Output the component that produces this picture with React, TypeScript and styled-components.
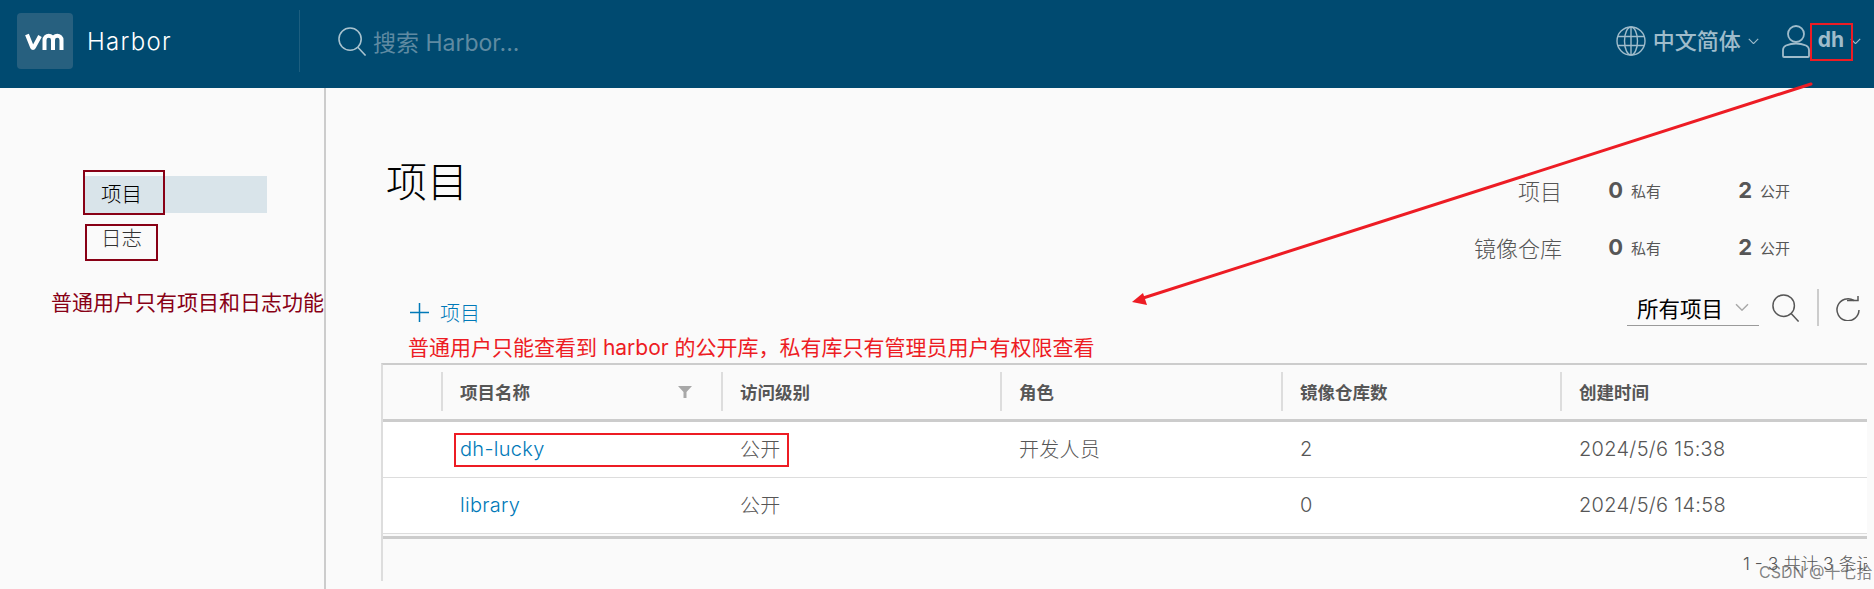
import React from 'react';
import styled, { createGlobalStyle } from 'styled-components';

const GlobalStyle = createGlobalStyle`
  html, body {
    margin: 0;
    padding: 0;
    background: #fafafa;
  }
  * {
    box-sizing: border-box;
  }
`;

const FONT = `Inter, Lato, "Noto Sans CJK SC", sans-serif`;

const Page = styled.div`
  position: relative;
  width: 1874px;
  height: 589px;
  overflow: hidden;
  background: #fafafa;
  font-family: ${FONT};
  color: #565656;
`;

const Header = styled.header`
  display: flex;
  align-items: center;
  height: 88px;
  padding-bottom: 6px;
  background: #004a70;
`;

const Brand = styled.div`
  display: flex;
  align-items: center;
  gap: 14px;
  width: 299px;
  padding-left: 17px;
`;

const LogoBox = styled.div`
  display: flex;
  align-items: center;
  justify-content: center;
  width: 56px;
  height: 56px;
  border-radius: 4px;
  background: #27607f;
`;

const BrandName = styled.span`
  font-size: 24px;
  font-weight: 300;
  color: #fff;
  letter-spacing: 1.3px;
`;

const HeaderDivider = styled.div`
  width: 1px;
  height: 62px;
  background: #1d5e7f;
`;

const SearchBox = styled.div`
  display: flex;
  align-items: center;
  gap: 6px;
  margin-left: 38px;
  color: #5f8aa2;
  font-size: 23px;
`;

const HeaderRight = styled.div`
  display: flex;
  align-items: center;
  margin-left: auto;
  padding-right: 13px;
  color: #9fbccb;
`;

const Language = styled.div`
  display: flex;
  align-items: center;
  gap: 7px;
  font-size: 22px;
  font-weight: 500;
`;

const LanguageName = styled.span`
  margin-top: -4px;
`;

const UserName = styled.span`
  margin: -3px 6px 0 7px;
  font-size: 21px;
  font-weight: 700;
`;

const UserMenu = styled.div`
  display: flex;
  align-items: center;
  margin-left: 22px;
`;

const Body = styled.div`
  display: flex;
  height: 501px;
`;

const Sidebar = styled.aside`
  width: 326px;
  padding-top: 88px;
  border-right: 2px solid #ccc;
`;

const NavItem = styled.div<{ $active?: boolean }>`
  display: flex;
  align-items: center;
  width: 184px;
  height: 37px;
  margin-left: 83px;
  padding: 0 0 3px 18px;
  font-size: 20.5px;
  font-weight: 300;
  background: ${(p) => (p.$active ? '#d9e4ea' : 'transparent')};
  color: ${(p) => (p.$active ? '#000' : '#333')};

  & + & {
    margin-top: 7px;
  }
`;

const SideNote = styled.div`
  margin: 31px 0 0 51px;
  font-size: 21px;
  line-height: 30px;
  white-space: nowrap;
  color: #880015;
`;

const Main = styled.main`
  flex: 1;
  min-width: 0;
  padding: 0 7px 0 55px;
`;

const PageHead = styled.div`
  display: flex;
  justify-content: space-between;
  height: 200px;
`;

const Title = styled.h1`
  margin: 72px 0 0 5px;
  font-size: 41px;
  font-weight: 300;
  line-height: 44px;
  color: #000;
`;

const Stats = styled.div`
  display: flex;
  flex-direction: column;
  gap: 29px;
  margin: 88px 77px 0 0;
`;

const StatRow = styled.div`
  display: flex;
  align-items: center;
  height: 28px;
`;

const StatLabel = styled.span`
  width: 100px;
  margin-right: 46px;
  font-size: 22px;
  font-weight: 300;
  text-align: right;
`;

const StatCell = styled.span`
  display: flex;
  align-items: center;
  gap: 8px;
  width: 130px;
  font-size: 15px;

  &:last-child {
    width: auto;
  }
`;

const StatCount = styled.b`
  font-size: 22px;
  font-weight: 700;
`;

const Toolbar = styled.div`
  display: flex;
  align-items: center;
  justify-content: space-between;
  height: 39px;
  padding: 0 7px 0 29px;
`;

const AddButton = styled.div`
  display: flex;
  align-items: center;
  gap: 11px;
  margin-top: 9px;
  font-size: 20px;
  font-weight: 300;
  color: #0079b8;
`;

const ToolGroup = styled.div`
  display: flex;
  align-items: center;
  gap: 13px;
`;

const FilterSelect = styled.div`
  display: flex;
  align-items: center;
  justify-content: space-between;
  width: 132px;
  height: 36px;
  padding: 0 10px;
  border-bottom: 1px solid #9a9a9a;
  font-size: 21.5px;
  color: #000;
`;

const ToolActions = styled.div`
  display: flex;
  align-items: center;
`;

const ToolDivider = styled.div`
  width: 2px;
  height: 37px;
  margin: 0 17px 0 17px;
  background: #ccc;
`;

const RedNote = styled.div`
  height: 36px;
  padding: 3px 0 0 27px;
  font-size: 21px;
  line-height: 36px;
  white-space: nowrap;
  color: #ed1c24;
`;

const Table = styled.div`
  border-left: 2px solid #ddd;
  border-top: 2px solid #ccc;
`;

const COLUMNS = '58px 280px 279px 281px 279px 307px';

const HeadRow = styled.div`
  display: grid;
  grid-template-columns: ${COLUMNS};
  height: 57px;
  padding: 7px 0 8px;
  border-bottom: 3px solid #ccc;
`;

const HeadCell = styled.div`
  display: flex;
  align-items: center;
  justify-content: space-between;
  padding: 0 29px 0 17px;
  border-left: 2px solid #ddd;
  font-size: 17.5px;
  font-weight: 700;

  &:first-child {
    border-left: 0;
  }
`;

const Row = styled.div`
  display: grid;
  grid-template-columns: ${COLUMNS};
  align-items: center;
  height: 56px;
  padding-bottom: 2px;
  background: #fff;
  border-bottom: 1px solid #ddd;
`;

const Cell = styled.div`
  padding-left: 19px;
  font-size: 20px;
  font-weight: 300;
  letter-spacing: 0.3px;
`;

const ProjectLink = styled(Cell)`
  color: #0079b8;
`;

const TableFooter = styled.div`
  height: 45px;
  margin-top: 2px;
  padding-left: 1360px;
  border-top: 3px solid #ccc;
  overflow: hidden;
  font-size: 17.5px;
  font-weight: 300;
  line-height: 50px;
  white-space: nowrap;
`;

// screenshot annotations drawn on top of the page
const Highlight = styled.div<{ $x: number; $y: number; $w: number; $h: number; $color: string }>`
  position: absolute;
  left: ${(p) => p.$x}px;
  top: ${(p) => p.$y}px;
  width: ${(p) => p.$w}px;
  height: ${(p) => p.$h}px;
  border: 2px solid ${(p) => p.$color};
`;

const ArrowLayer = styled.svg`
  position: absolute;
  left: 0;
  top: 0;
  pointer-events: none;
`;

const Watermark = styled.div`
  position: absolute;
  left: 1759px;
  top: 562px;
  font-size: 16px;
  line-height: 20px;
  color: rgba(90, 90, 90, 0.75);
`;

const VmLogo = () => (
  <svg width="40" height="17" viewBox="0 0 40 17" fill="none" stroke="#fff" strokeWidth="4">
    <path d="M2 1.500l5 12.500q1 2 2 0L15 3" />
    <path d="M19.500 17V7a4 4 0 0 1 8.500 0v10M28 7a4 4 0 0 1 8.500 0v10" />
  </svg>
);

const SearchIcon = ({ size, color }: { size: number; color: string }) => (
  <svg width={size} height={size} viewBox="0 0 30 30" fill="none" stroke={color} strokeWidth="1.6">
    <circle cx="12.5" cy="12.5" r="11.5" />
    <path d="M20.5 21l8 8.5" />
  </svg>
);

const GlobeIcon = () => (
  <svg width="30" height="30" viewBox="0 0 30 30" fill="none" stroke="#9fbccb" strokeWidth="1.4">
    <circle cx="15" cy="15" r="14" />
    <ellipse cx="15" cy="15" rx="6.5" ry="14" />
    <path d="M15 1v28M2 10.5h26M2 19.5h26" />
  </svg>
);

const UserIcon = () => (
  <svg width="30" height="33" viewBox="0 0 28 33" fill="none" stroke="#9fbccb" strokeWidth="1.8">
    <circle cx="14" cy="9" r="8" />
    <path d="M1 31v-6q0-3 3-4.500q5-2 10-2t10 2q3 1.500 3 4.500v6q0 1-1 1H2q-1 0-1-1z" />
  </svg>
);

const Chevron = ({ color, size = 11 }: { color: string; size?: number }) => (
  <svg width={size} height={size * 0.6} viewBox="0 0 11 7" fill="none" stroke={color} strokeWidth="1.2">
    <path d="M.5 1l5 5 5-5" />
  </svg>
);

const PlusIcon = () => (
  <svg width="19" height="19" viewBox="0 0 19 19" stroke="#0079b8" strokeWidth="1.5">
    <path d="M9.500 0v19M0 9.500h19" />
  </svg>
);

const FilterIcon = () => (
  <svg width="14" height="12" viewBox="0 0 14 12" fill="#a8a8a8">
    <path d="M0 0h14L8.500 6v6h-3V6z" />
  </svg>
);

const RefreshIcon = () => (
  <svg width="24" height="26" viewBox="0 0 24 26" fill="none" stroke="#565656" strokeWidth="1.5">
    <path d="M18 5.500A11 11 0 1 0 23 15" />
    <path d="M11 5.500h11V1" />
  </svg>
);

const projects = [
  { name: 'dh-lucky', access: '公开', role: '开发人员', repos: 2, created: '2024/5/6 15:38' },
  { name: 'library', access: '公开', role: '', repos: 0, created: '2024/5/6 14:58' },
];

const stats = [
  { label: '项目', priv: 0, pub: 2 },
  { label: '镜像仓库', priv: 0, pub: 2 },
];

export default function App() {
  return (
    <Page>
      <GlobalStyle />
      <Header>
        <Brand>
          <LogoBox>
            <VmLogo />
          </LogoBox>
          <BrandName>Harbor</BrandName>
        </Brand>
        <HeaderDivider />
        <SearchBox>
          <SearchIcon size={29} color="#a9c3cf" />
          搜索 Harbor...
        </SearchBox>
        <HeaderRight>
          <Language>
            <GlobeIcon />
            <LanguageName>中文简体</LanguageName>
            <Chevron color="#9fbccb" />
          </Language>
          <UserMenu>
            <UserIcon />
            <UserName>dh</UserName>
            <Chevron color="#9fbccb" />
          </UserMenu>
        </HeaderRight>
      </Header>
      <Body>
        <Sidebar>
          <NavItem $active>项目</NavItem>
          <NavItem>日志</NavItem>
          <SideNote>普通用户只有项目和日志功能</SideNote>
        </Sidebar>
        <Main>
          <PageHead>
            <Title>项目</Title>
            <Stats>
              {stats.map((s) => (
                <StatRow key={s.label}>
                  <StatLabel>{s.label}</StatLabel>
                  <StatCell>
                    <StatCount>{s.priv}</StatCount>私有
                  </StatCell>
                  <StatCell>
                    <StatCount>{s.pub}</StatCount>公开
                  </StatCell>
                </StatRow>
              ))}
            </Stats>
          </PageHead>
          <Toolbar>
            <AddButton>
              <PlusIcon />
              项目
            </AddButton>
            <ToolGroup>
              <FilterSelect>
                所有项目
                <Chevron color="#a8a8a8" size={14} />
              </FilterSelect>
              <ToolActions>
                <SearchIcon size={28} color="#565656" />
                <ToolDivider />
                <RefreshIcon />
              </ToolActions>
            </ToolGroup>
          </Toolbar>
          <RedNote>普通用户只能查看到 harbor 的公开库，私有库只有管理员用户有权限查看</RedNote>
          <Table>
            <HeadRow>
              <HeadCell />
              <HeadCell>
                项目名称
                <FilterIcon />
              </HeadCell>
              <HeadCell>访问级别</HeadCell>
              <HeadCell>角色</HeadCell>
              <HeadCell>镜像仓库数</HeadCell>
              <HeadCell>创建时间</HeadCell>
            </HeadRow>
            {projects.map((p) => (
              <Row key={p.name}>
                <Cell />
                <ProjectLink>{p.name}</ProjectLink>
                <Cell>{p.access}</Cell>
                <Cell>{p.role}</Cell>
                <Cell>{p.repos}</Cell>
                <Cell>{p.created}</Cell>
              </Row>
            ))}
            <TableFooter>1 - 3 共计 3 条记录</TableFooter>
          </Table>
        </Main>
      </Body>

      <Highlight $x={83} $y={170} $w={82} $h={45} $color="#880015" />
      <Highlight $x={85} $y={224} $w={73} $h={37} $color="#880015" />
      <Highlight $x={1810} $y={23} $w={43} $h={38} $color="#ed1c24" />
      <Highlight $x={454} $y={433} $w={335} $h={34} $color="#ed1c24" />
      <ArrowLayer width="1874" height="589">
        <path d="M1811 84L1140 299" stroke="#ed1c24" strokeWidth="3" strokeLinecap="round" />
        <path d="M1132 302l11-9 4 12z" fill="#ed1c24" />
      </ArrowLayer>
      <Watermark>CSDN @十七拾</Watermark>
    </Page>
  );
}
